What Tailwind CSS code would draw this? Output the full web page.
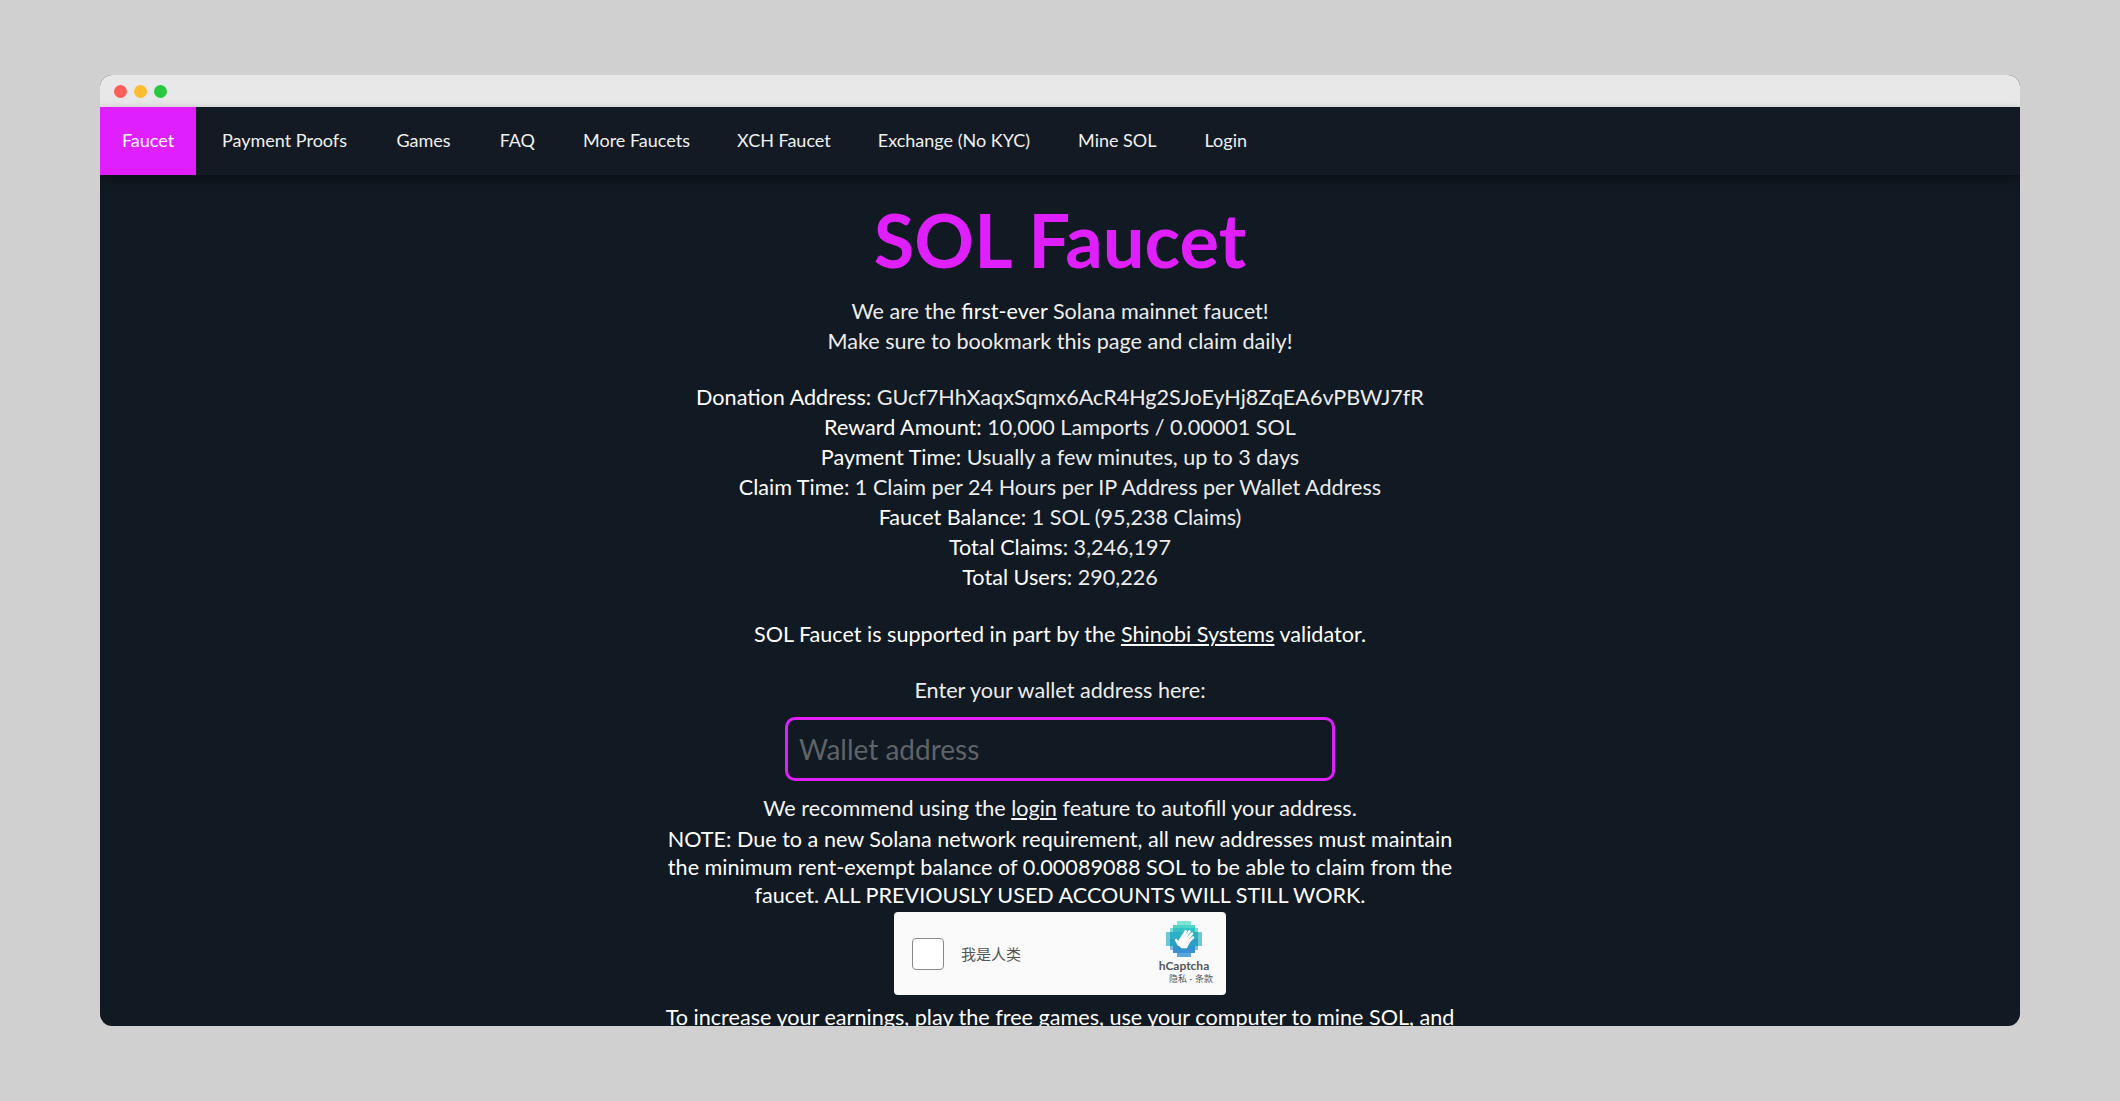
<!DOCTYPE html>
<html lang="en">
<head>
    <meta charset="UTF-8">
    <title>SOL Faucet</title>
    <script src="https://cdn.jsdelivr.net/npm/@tailwindcss/browser@4"></script>
</head>
<body class="h-[1101px] overflow-hidden bg-[#d0d0d0] font-['Lato','Noto_Sans_CJK_SC',sans-serif]">
    <div class="mx-[100px] mt-[75px] h-[951px] w-[1920px] overflow-hidden rounded-xl bg-[#111922] text-white">
        <div class="flex h-[32px] items-center gap-[7px] bg-[#e8e8e8] pl-[14px] pt-[1px]">
            <span class="h-[13px] w-[13px] rounded-full bg-[#ff5f57]"></span>
            <span class="h-[13px] w-[13px] rounded-full bg-[#febc2e]"></span>
            <span class="h-[13px] w-[13px] rounded-full bg-[#28c840]"></span>
        </div>

        <nav class="flex h-[68px] items-center bg-[#131a24] text-[18px] text-[#f0f0f0] shadow-[0_4px_10px_rgba(0,0,0,0.35)]">
            <a class="flex h-full w-[96px] items-center justify-center bg-[#e01fff] pb-[2px] text-white">Faucet</a>
            <a class="mb-[2px] ml-[2px] px-6">Payment Proofs</a>
            <a class="mb-[2px] ml-[1.5px] px-6">Games</a>
            <a class="mb-[2px] ml-[1px] px-6">FAQ</a>
            <a class="mb-[2px] mr-[-1px] px-6">More Faucets</a>
            <a class="mb-[2px] mr-[-1px] px-6">XCH Faucet</a>
            <a class="mb-[2px] px-6">Exchange (No KYC)</a>
            <a class="mb-[2px] px-6">Mine SOL</a>
            <a class="mb-[2px] px-6">Login</a>
        </nav>

        <main class="flex flex-col items-center text-center text-[21.6px] leading-[30px]">
            <h1 class="mt-[19px] h-[92px] text-[74px] font-bold leading-[92px] text-[#e01fff]">SOL Faucet</h1>
            <p class="mt-[10px] text-[#ececec]">We are the <span class="text-white">first-ever</span> Solana mainnet faucet!<br>Make sure to bookmark this page and claim daily!</p>
            <p class="mt-[26px] text-[#ececec]">
                <b class="font-normal text-white">Donation Address:</b> GUcf7HhXaqxSqmx6AcR4Hg2SJoEyHj8ZqEA6vPBWJ7fR<br>
                <b class="font-normal text-white">Reward Amount:</b> 10,000 Lamports / 0.00001 SOL<br>
                <b class="font-normal text-white">Payment Time:</b> Usually a few minutes, up to 3 days<br>
                <b class="font-normal text-white">Claim Time:</b> 1 Claim per 24 Hours per IP Address per Wallet Address<br>
                <b class="font-normal text-white">Faucet Balance:</b> 1 SOL (95,238 Claims)<br>
                <b class="font-normal text-white">Total Claims:</b> 3,246,197<br>
                <b class="font-normal text-white">Total Users:</b> 290,226
            </p>
            <p class="mt-[27px]">SOL Faucet is supported in part by the <a class="underline">Shinobi Systems</a> validator.</p>
            <p class="mt-[26px] text-[#ececec]">Enter your wallet address here:</p>
            <input placeholder="Wallet address" class="mt-[12px] h-[64px] w-[550px] rounded-[10px] border-[3px] border-[#e01fff] bg-transparent px-[11px] text-[28px] placeholder-[#5f6367]">
            <p class="mt-[12px] text-[#f4f4f4]">We recommend using the <a class="underline">login</a> feature to autofill your address.</p>
            <p class="mt-[2px] w-[795px] leading-[28px]">NOTE: Due to a new Solana network requirement, all new addresses must maintain<br>the minimum rent-exempt balance of 0.00089088 SOL to be able to claim from the<br>faucet. ALL PREVIOUSLY USED ACCOUNTS WILL STILL WORK.</p>

            <div class="mt-[3px] flex h-[83px] w-[332px] items-center rounded-[4px] bg-[#fafafa]">
                <span class="ml-[18px] h-[32px] w-[32px] rounded-[4px] border border-[#8a8a8a] bg-white"></span>
                <span class="ml-[17px] text-[15px] text-[#555]">我是人类</span>
                <div class="ml-auto mr-[13px] mt-[-2px] flex w-[58px] flex-col items-center">
                    <svg viewBox="0 0 10 10" class="h-[36px] w-[36px]">
                        <g shape-rendering="crispEdges">
                            <rect x="3" y="0" width="4" height="1" fill="#7fe3d6"/>
                            <rect x="2" y="1" width="6" height="1" fill="#4fd4c8"/>
                            <rect x="1" y="2" width="8" height="1" fill="#36c2c4"/>
                            <rect x="0" y="3" width="10" height="2" fill="#2cb0c2"/>
                            <rect x="0" y="5" width="10" height="2" fill="#2aa0c4"/>
                            <rect x="1" y="7" width="8" height="1" fill="#2f94cc"/>
                            <rect x="2" y="8" width="6" height="1" fill="#3a8fd4"/>
                            <rect x="3" y="9" width="4" height="1" fill="#5aa6de"/>
                            <rect x="0" y="3" width="1" height="4" fill="#6cc8d4"/>
                            <rect x="9" y="3" width="1" height="4" fill="#6cc8d4"/>
                            <rect x="1" y="2" width="1" height="1" fill="#7fd8d8"/>
                            <rect x="8" y="2" width="1" height="1" fill="#7fd8d8"/>
                            <rect x="1" y="7" width="1" height="1" fill="#80bce0"/>
                            <rect x="8" y="7" width="1" height="1" fill="#80bce0"/>
                        </g>
                        <!-- hand -->
                        <g stroke="#fff" stroke-width="0.72" stroke-linecap="round" fill="none">
                            <path d="M4 5.2 5.5 2.9"/>
                            <path d="M4.8 5.2 6.5 2.9"/>
                            <path d="M5.5 5.5 7.2 3.5"/>
                            <path d="M6 6 7.5 4.6"/>
                            <path d="M3.6 6.6 2.8 5.3"/>
                        </g>
                        <path d="M3.6 5 6 4.4 6.8 5.6 5.8 7.6 4.2 7.6 3.2 6.4Z" fill="#fff"/>
                    </svg>
                    <span class="mt-[2px] text-[12px] font-bold leading-[14px] text-[#555]">hCaptcha</span>
                    <span class="self-end text-[9px] leading-[12px] text-[#555]">隐私 - 条款</span>
                </div>
            </div>

            <p class="mt-[7px] w-[800px]">To increase your earnings, play the free games, use your computer to mine SOL, and</p>
        </main>
    </div>
</body>
</html>
